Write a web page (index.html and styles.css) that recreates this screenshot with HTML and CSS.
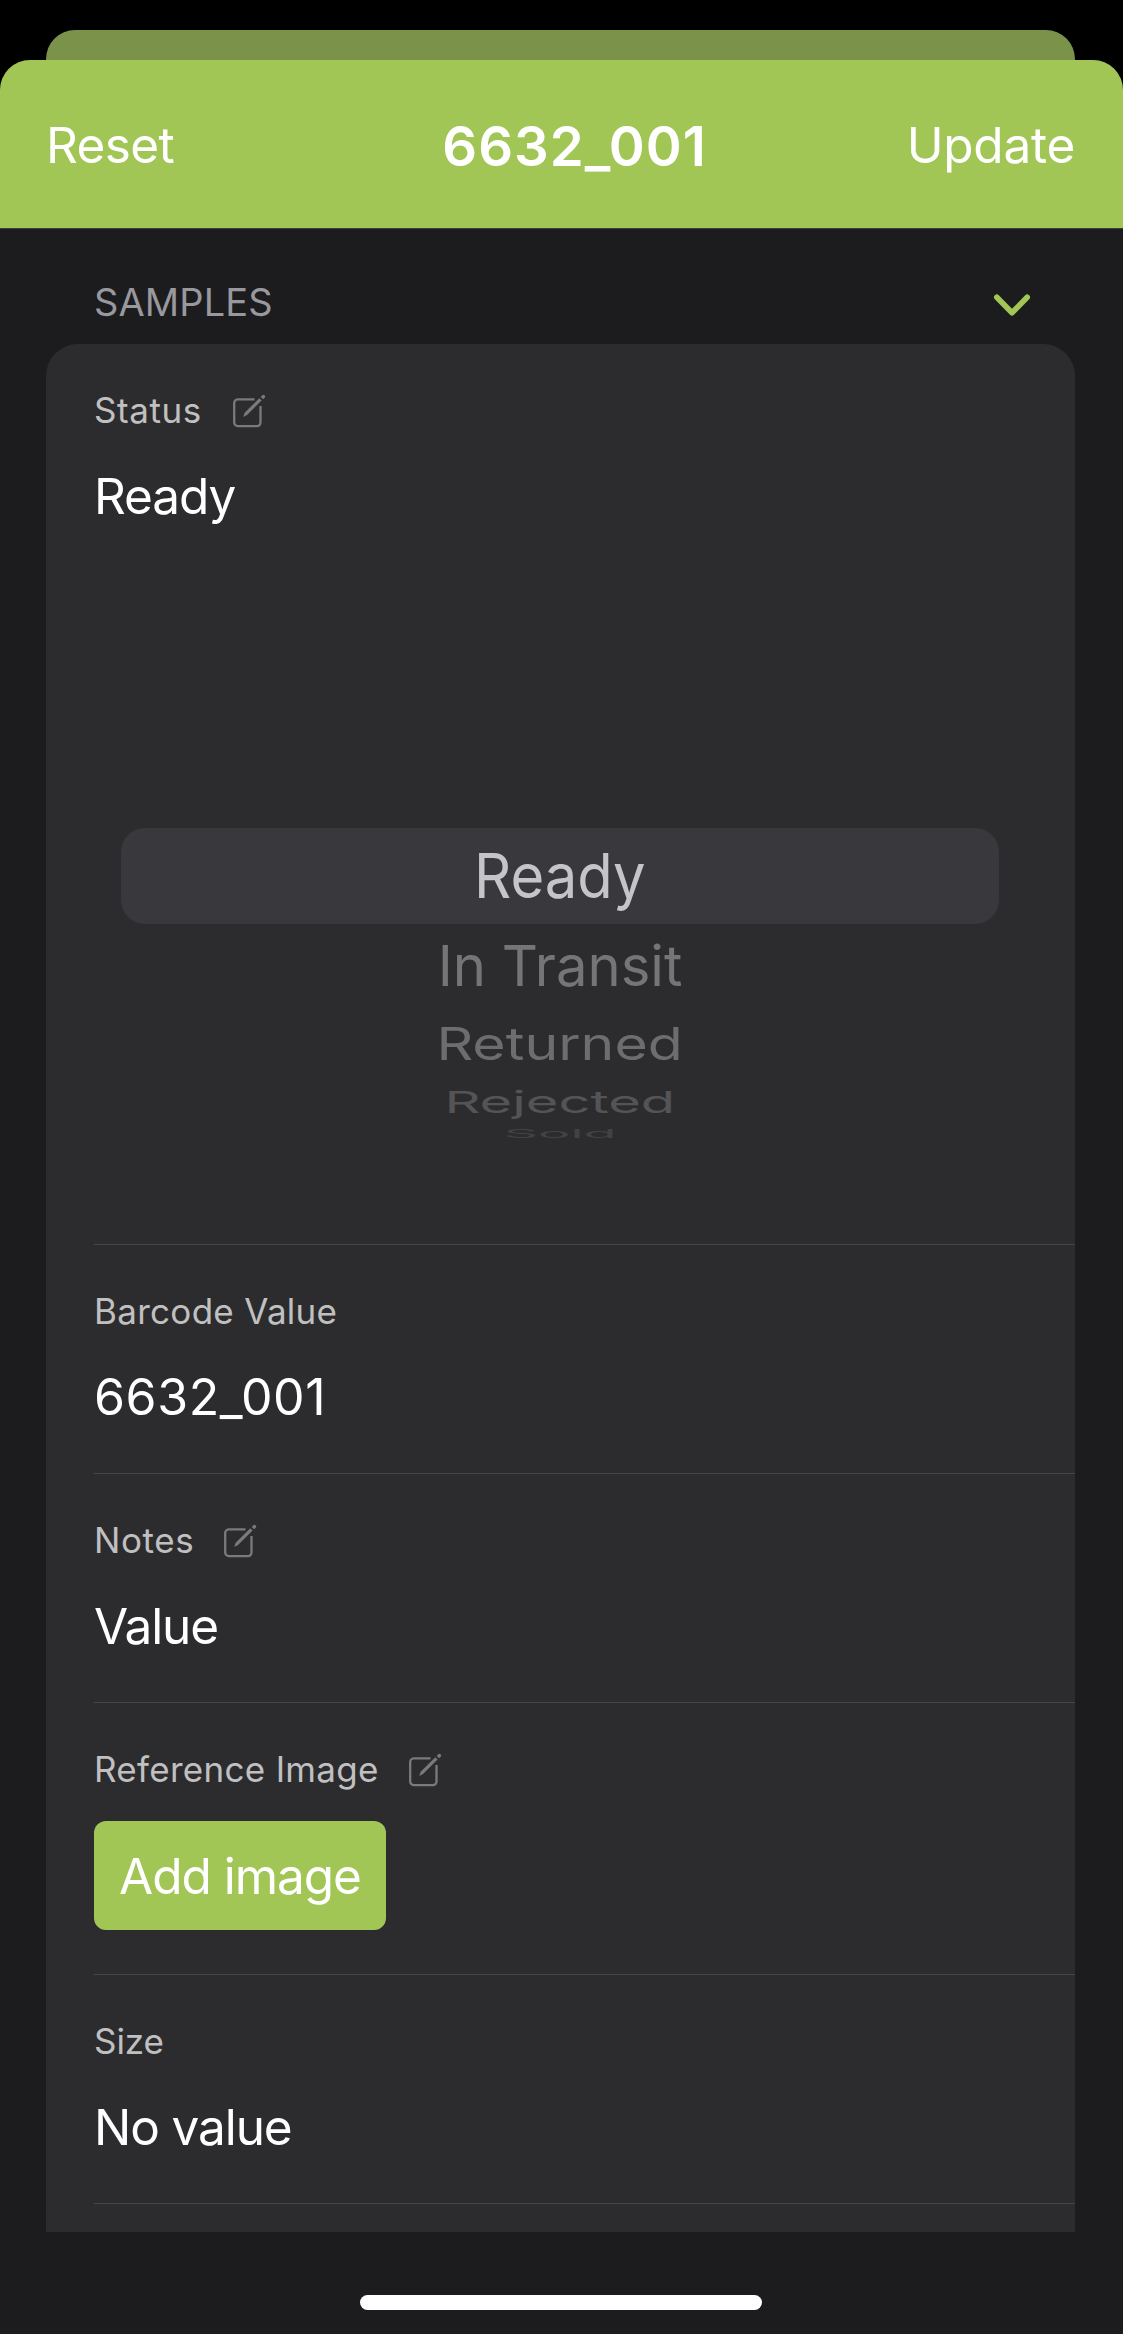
FILE: index.html
```html
<!DOCTYPE html>
<html lang="en">
<head>
<meta charset="utf-8">
<title>6632_001</title>
<link rel="stylesheet" href="styles.css">
</head>
<body>
<svg class="symbols" aria-hidden="true">
  <symbol id="edit" viewBox="0 0 34 42">
    <g fill="none" stroke="currentColor" stroke-width="2.3">
      <path d="M21.5 10.4H4.6A3.5 3.5 0 0 0 1.2 13.900V33.600A3.5 3.5 0 0 0 4.600 37.100H24A3.5 3.5 0 0 0 27.500 33.600V17"/>
    </g>
    <path fill="currentColor" d="M10.200 28L11.700 23.800L26.300 9.200L28.600 11.500L14 26.100Z"/>
    <path fill="currentColor" d="M27.700 7.900L29.300 6.300Q30.600 5.300 31.700 6.400Q32.800 7.600 31.700 8.800L30.100 10.300Z"/>
  </symbol>
</svg>

<div class="backdrop-sheet"></div>
<main class="sheet">
  <header class="navbar">
    <button class="navbar__action navbar__action--reset">Reset</button>
    <h1 class="navbar__title">6632_001</h1>
    <button class="navbar__action navbar__action--update">Update</button>
  </header>

  <div class="section-header">
    <h2 class="section-header__title">SAMPLES</h2>
    <svg class="section-header__chevron" viewBox="0 0 38 24" aria-hidden="true">
      <path d="M3.800 4.300L19 19.800L34.200 4.300"/>
    </svg>
  </div>

  <section class="card">
    <div class="row row--picker">
      <div class="row__label row__label--status">Status<svg class="row__edit"><use href="#edit"/></svg></div>
      <div class="row__value">Ready</div>
      <div class="picker">
        <div class="picker__item picker__item--selected"><span>Ready</span></div>
        <div class="picker__item picker__item--first"><span>In Transit</span></div>
        <div class="picker__item picker__item--second"><span>Returned</span></div>
        <div class="picker__item picker__item--third"><span>Rejected</span></div>
        <div class="picker__item picker__item--fourth"><span>Sold</span></div>
      </div>
    </div>
    <div class="row">
      <div class="row__label">Barcode Value</div>
      <div class="row__value row__value--numeric">6632_001</div>
    </div>
    <div class="row">
      <div class="row__label row__label--notes">Notes<svg class="row__edit"><use href="#edit"/></svg></div>
      <div class="row__value">Value</div>
    </div>
    <div class="row row--image">
      <div class="row__label">Reference Image<svg class="row__edit"><use href="#edit"/></svg></div>
      <button class="add-button">Add image</button>
    </div>
    <div class="row">
      <div class="row__label row__label--size">Size</div>
      <div class="row__value">No value</div>
    </div>
  </section>

  <div class="home-indicator"></div>
</main>
</body>
</html>
```
FILE: styles.css
```css
* {
  box-sizing: border-box;
}

body {
  margin: 0;
  height: 2334px;
  padding-top: 30px;
  overflow: hidden;
  background: #000;
  color: #fff;
  font-family: Inter, "Liberation Sans", sans-serif;
  font-size: 49.5px;
  line-height: 60px;
}

button {
  padding: 0;
  border: 0;
  background: none;
  color: inherit;
  font: inherit;
}

h1,
h2 {
  margin: 0;
}

.symbols {
  display: none;
}

.backdrop-sheet {
  height: 30px;
  margin: 0 48px 0 46px;
  border-radius: 29px 29px 0 0;
  background: #7a924a;
}

.sheet {
  display: flex;
  flex-direction: column;
  height: 2274px;
  border-radius: 30px 30px 0 0;
  overflow: hidden;
  background: #1c1c1e;
}

.navbar {
  display: grid;
  grid-template-columns: 1fr auto 1fr;
  align-items: center;
  height: 169px;
  padding: 2px 48px 0 46px;
  border-bottom: 1px solid #3f3f41;
  background: #a1c655;
}

.navbar__action--reset {
  justify-self: start;
  letter-spacing: -0.6px;
}

.navbar__action--update {
  justify-self: end;
  letter-spacing: -0.25px;
}

.navbar__title {
  padding: 2px 0 0 28px;
  font-size: 54.5px;
  font-weight: 600;
  letter-spacing: 1px;
}

.section-header {
  display: flex;
  justify-content: space-between;
  height: 115px;
  padding: 50px 92px 0 94px;
}

.section-header__title {
  color: #98989f;
  font-size: 38px;
  font-weight: 400;
  line-height: 46px;
  letter-spacing: 0.13px;
}

.section-header__chevron {
  width: 38px;
  height: 24px;
  margin-top: 14px;
  fill: none;
  stroke: #a1c655;
  stroke-width: 5.6;
  stroke-linecap: round;
  stroke-linejoin: round;
}

.card {
  height: 1888px;
  margin: 0 48px 0 46px;
  padding-left: 48px;
  border-radius: 32px 32px 0 0;
  background: #2c2c2e;
}

.row {
  height: 229px;
  padding-top: 45px;
  border-bottom: 1px solid #464649;
}

.row--picker {
  height: 901px;
}

.row--image {
  height: 272px;
}

.row__label {
  display: flex;
  gap: 30px;
  height: 42px;
  color: #c0c0c1;
  font-size: 35px;
  line-height: 42px;
  letter-spacing: 0.3px;
}

.row__label--status {
  gap: 31px;
  letter-spacing: 0.55px;
}

.row__label--notes {
  letter-spacing: 0.6px;
}

.row__label--size {
  letter-spacing: -0.05px;
}

.row__edit {
  width: 34px;
  height: 42px;
  color: #7a7a7b;
}

.row__value {
  margin-top: 35px;
  letter-spacing: -1.1px;
}

.row__value--numeric {
  font-size: 50px;
  letter-spacing: 0.6px;
}

.picker {
  margin: 302px 76px 0 27px;
  font-size: 62px;
  text-align: center;
}

.picker__item span {
  display: inline-block;
}

.picker__item--selected {
  height: 96px;
  border-radius: 24px;
  background: #39383d;
  color: #c5c5c7;
  line-height: 96px;
}

.picker__item--selected span {
  transform: scaleX(0.935);
}

.picker__item--first {
  height: 83px;
  color: #757576;
  line-height: 83px;
}

.picker__item--first span {
  transform: scale(0.906, 0.91);
}

.picker__item--second {
  height: 73px;
  color: #6d6d6e;
  line-height: 73px;
}

.picker__item--second span {
  transform: scale(0.922, 0.727);
}

.picker__item--third {
  height: 44px;
  color: #545456;
  line-height: 44px;
}

.picker__item--third span {
  transform: scale(0.903, 0.49);
}

.picker__item--fourth {
  height: 19px;
  color: #424244;
  line-height: 19px;
}

.picker__item--fourth span {
  transform: scale(0.87, 0.19);
}

.add-button {
  display: block;
  width: 292px;
  height: 109px;
  margin-top: 31px;
  border-radius: 12px;
  background: #a1c655;
  letter-spacing: -1.02px;
}

.home-indicator {
  width: 402px;
  height: 15px;
  margin: 63px 0 0 360px;
  border-radius: 8px;
  background: #fff;
}
```
